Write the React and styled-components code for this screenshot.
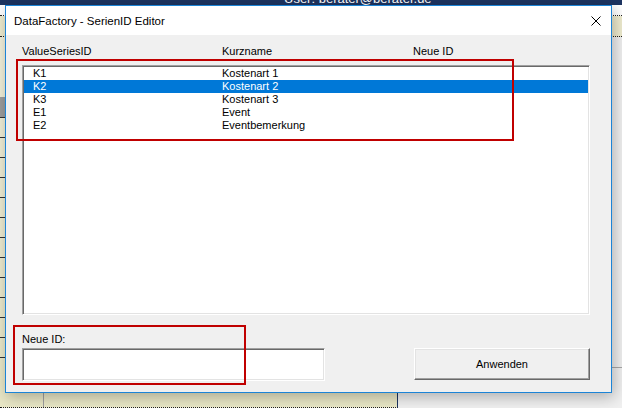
import React from "react";
import styled, { createGlobalStyle } from "styled-components";

const GlobalStyle = createGlobalStyle`
  html, body {
    margin: 0;
    padding: 0;
  }
  body {
    width: 622px;
    height: 408px;
    overflow: hidden;
    font-family: "Liberation Sans", Arial, sans-serif;
  }
`;

const rows = [
  { id: "K1", name: "Kostenart 1" },
  { id: "K2", name: "Kostenart 2", selected: true },
  { id: "K3", name: "Kostenart 3" },
  { id: "E1", name: "Event" },
  { id: "E2", name: "Eventbemerkung" },
];

// ---- background (the spreadsheet behind the dialog) ----

const Desktop = styled.div`
  position: relative;
  width: 622px;
  height: 408px;
  overflow: hidden;
  display: flex;
  flex-direction: column;
  background: #f0f0f0;
`;

const TopBar = styled.div`
  height: 5px;
  flex: none;
  overflow: hidden;
  display: flex;
  align-items: flex-end;
  padding-left: 284px;
  background: #1d3461;
  span {
    color: #fff;
    font-size: 13px;
    line-height: 13px;
    white-space: nowrap;
  }
`;

const TabStrip = styled.div`
  height: 10px;
  flex: none;
  background: #fff;
  border-bottom: 1px dotted #222;
`;

const Ribbon = styled.div`
  height: 20px;
  flex: none;
  background: #efeccf;
  border-bottom: 1px dotted #222;
`;

const Lower = styled.div`
  flex: 1;
  display: flex;
`;

const SheetPane = styled.div`
  width: 397px;
  display: flex;
  background: linear-gradient(to bottom, #f3f1dc, #e9e7c6);
  border-right: 1px solid #1d3461;
  border-bottom: 1px dotted #222;
`;

const RowHeaders = styled.div`
  width: 43px;
  border-right: 1px solid #a0a0a0;
  padding-top: 60px;
`;

const GridLines = styled.div`
  height: 260px;
  border-top: 20px solid #9d9d9d;
  background: repeating-linear-gradient(
    to bottom,
    #333 0 1px,
    transparent 1px 20px
  );
`;

const SidePane = styled.div`
  flex: 1;
  background: #f0f0f0;
  padding-top: 330px;
  div {
    border-top: 1px solid #a8a8a8;
  }
`;

// ---- dialog ----

const Dialog = styled.div`
  position: absolute;
  left: 5px;
  top: 5px;
  width: 607px;
  height: 388px;
  box-sizing: border-box;
  border: 1px solid #1c84d6;
  background: #f0f0f0;
  box-shadow: 2px 4px 14px rgba(0, 0, 0, 0.28);
  display: flex;
  flex-direction: column;
`;

const TitleBar = styled.div`
  height: 29px;
  flex: none;
  display: flex;
  align-items: center;
  justify-content: space-between;
  padding: 0 10px 0 8px;
  background: #fff;
  color: #000;
  font-size: 11.5px;
`;

const Body = styled.div`
  flex: 1;
  padding: 10px 21px 0 16px;
  font-size: 11px;
  color: #000;
`;

const HeaderRow = styled.div`
  display: grid;
  grid-template-columns: 200px 191px 1fr;
  line-height: 13px;
  height: 13px;
`;

const ListBox = styled.div`
  margin-top: 7px;
  height: 250px;
  box-sizing: border-box;
  padding: 1px;
  background: #fff;
  border: 1px solid;
  border-color: #a0a0a0 #fff #fff #a0a0a0;
  box-shadow: inset 1px 1px 0 #696969, inset -1px -1px 0 #e3e3e3;
`;

const ListRow = styled.div`
  display: grid;
  grid-template-columns: 189px 1fr;
  height: 13px;
  line-height: 13px;
  padding-left: 9px;
  background: ${(p) => (p.$selected ? "#0078d7" : "transparent")};
  color: ${(p) => (p.$selected ? "#fff" : "#000")};
`;

const FieldLabel = styled.div`
  margin-top: 18px;
  height: 13px;
  line-height: 13px;
`;

const BottomRow = styled.div`
  margin-top: 2px;
  display: flex;
  justify-content: space-between;
  align-items: flex-start;
`;

const TextBox = styled.div`
  width: 303px;
  height: 33px;
  box-sizing: border-box;
  background: #fff;
  border: 1px solid;
  border-color: #a0a0a0 #fff #fff #a0a0a0;
  box-shadow: inset 1px 1px 0 #696969, inset -1px -1px 0 #e3e3e3;
`;

const Button = styled.button`
  width: 176px;
  height: 32px;
  box-sizing: border-box;
  padding: 0;
  font-family: inherit;
  font-size: 11px;
  color: #000;
  background: #f0f0f0;
  border: 1px solid;
  border-color: #fff #696969 #696969 #fff;
  box-shadow: inset -1px -1px 0 #a0a0a0, inset 1px 1px 0 #e3e3e3;
`;

const Marker = styled.div`
  position: absolute;
  box-sizing: border-box;
  border: 2px solid #c00000;
  pointer-events: none;
`;

const CloseIcon = () => (
  <svg width="10" height="10" viewBox="0 0 10 10">
    <path d="M0.5 0.5 L9.5 9.5 M9.5 0.5 L0.5 9.5" stroke="#000" strokeWidth="1" />
  </svg>
);

export default function App() {
  return (
    <>
      <GlobalStyle />
      <Desktop>
        <TopBar>
          <span>User: berater@berater.de</span>
        </TopBar>
        <TabStrip />
        <Ribbon />
        <Lower>
          <SheetPane>
            <RowHeaders>
              <GridLines />
            </RowHeaders>
          </SheetPane>
          <SidePane>
            <div />
          </SidePane>
        </Lower>

        <Dialog>
          <TitleBar>
            <span>DataFactory - SerienID Editor</span>
            <CloseIcon />
          </TitleBar>
          <Body>
            <HeaderRow>
              <span>ValueSeriesID</span>
              <span>Kurzname</span>
              <span>Neue ID</span>
            </HeaderRow>
            <ListBox>
              {rows.map((r) => (
                <ListRow key={r.id} $selected={r.selected}>
                  <span>{r.id}</span>
                  <span>{r.name}</span>
                </ListRow>
              ))}
            </ListBox>
            <FieldLabel>Neue ID:</FieldLabel>
            <BottomRow>
              <TextBox />
              <Button>Anwenden</Button>
            </BottomRow>
          </Body>
          <Marker style={{ left: 10, top: 53, width: 498, height: 82 }} />
          <Marker style={{ left: 7, top: 319, width: 233, height: 60 }} />
        </Dialog>
      </Desktop>
    </>
  );
}
